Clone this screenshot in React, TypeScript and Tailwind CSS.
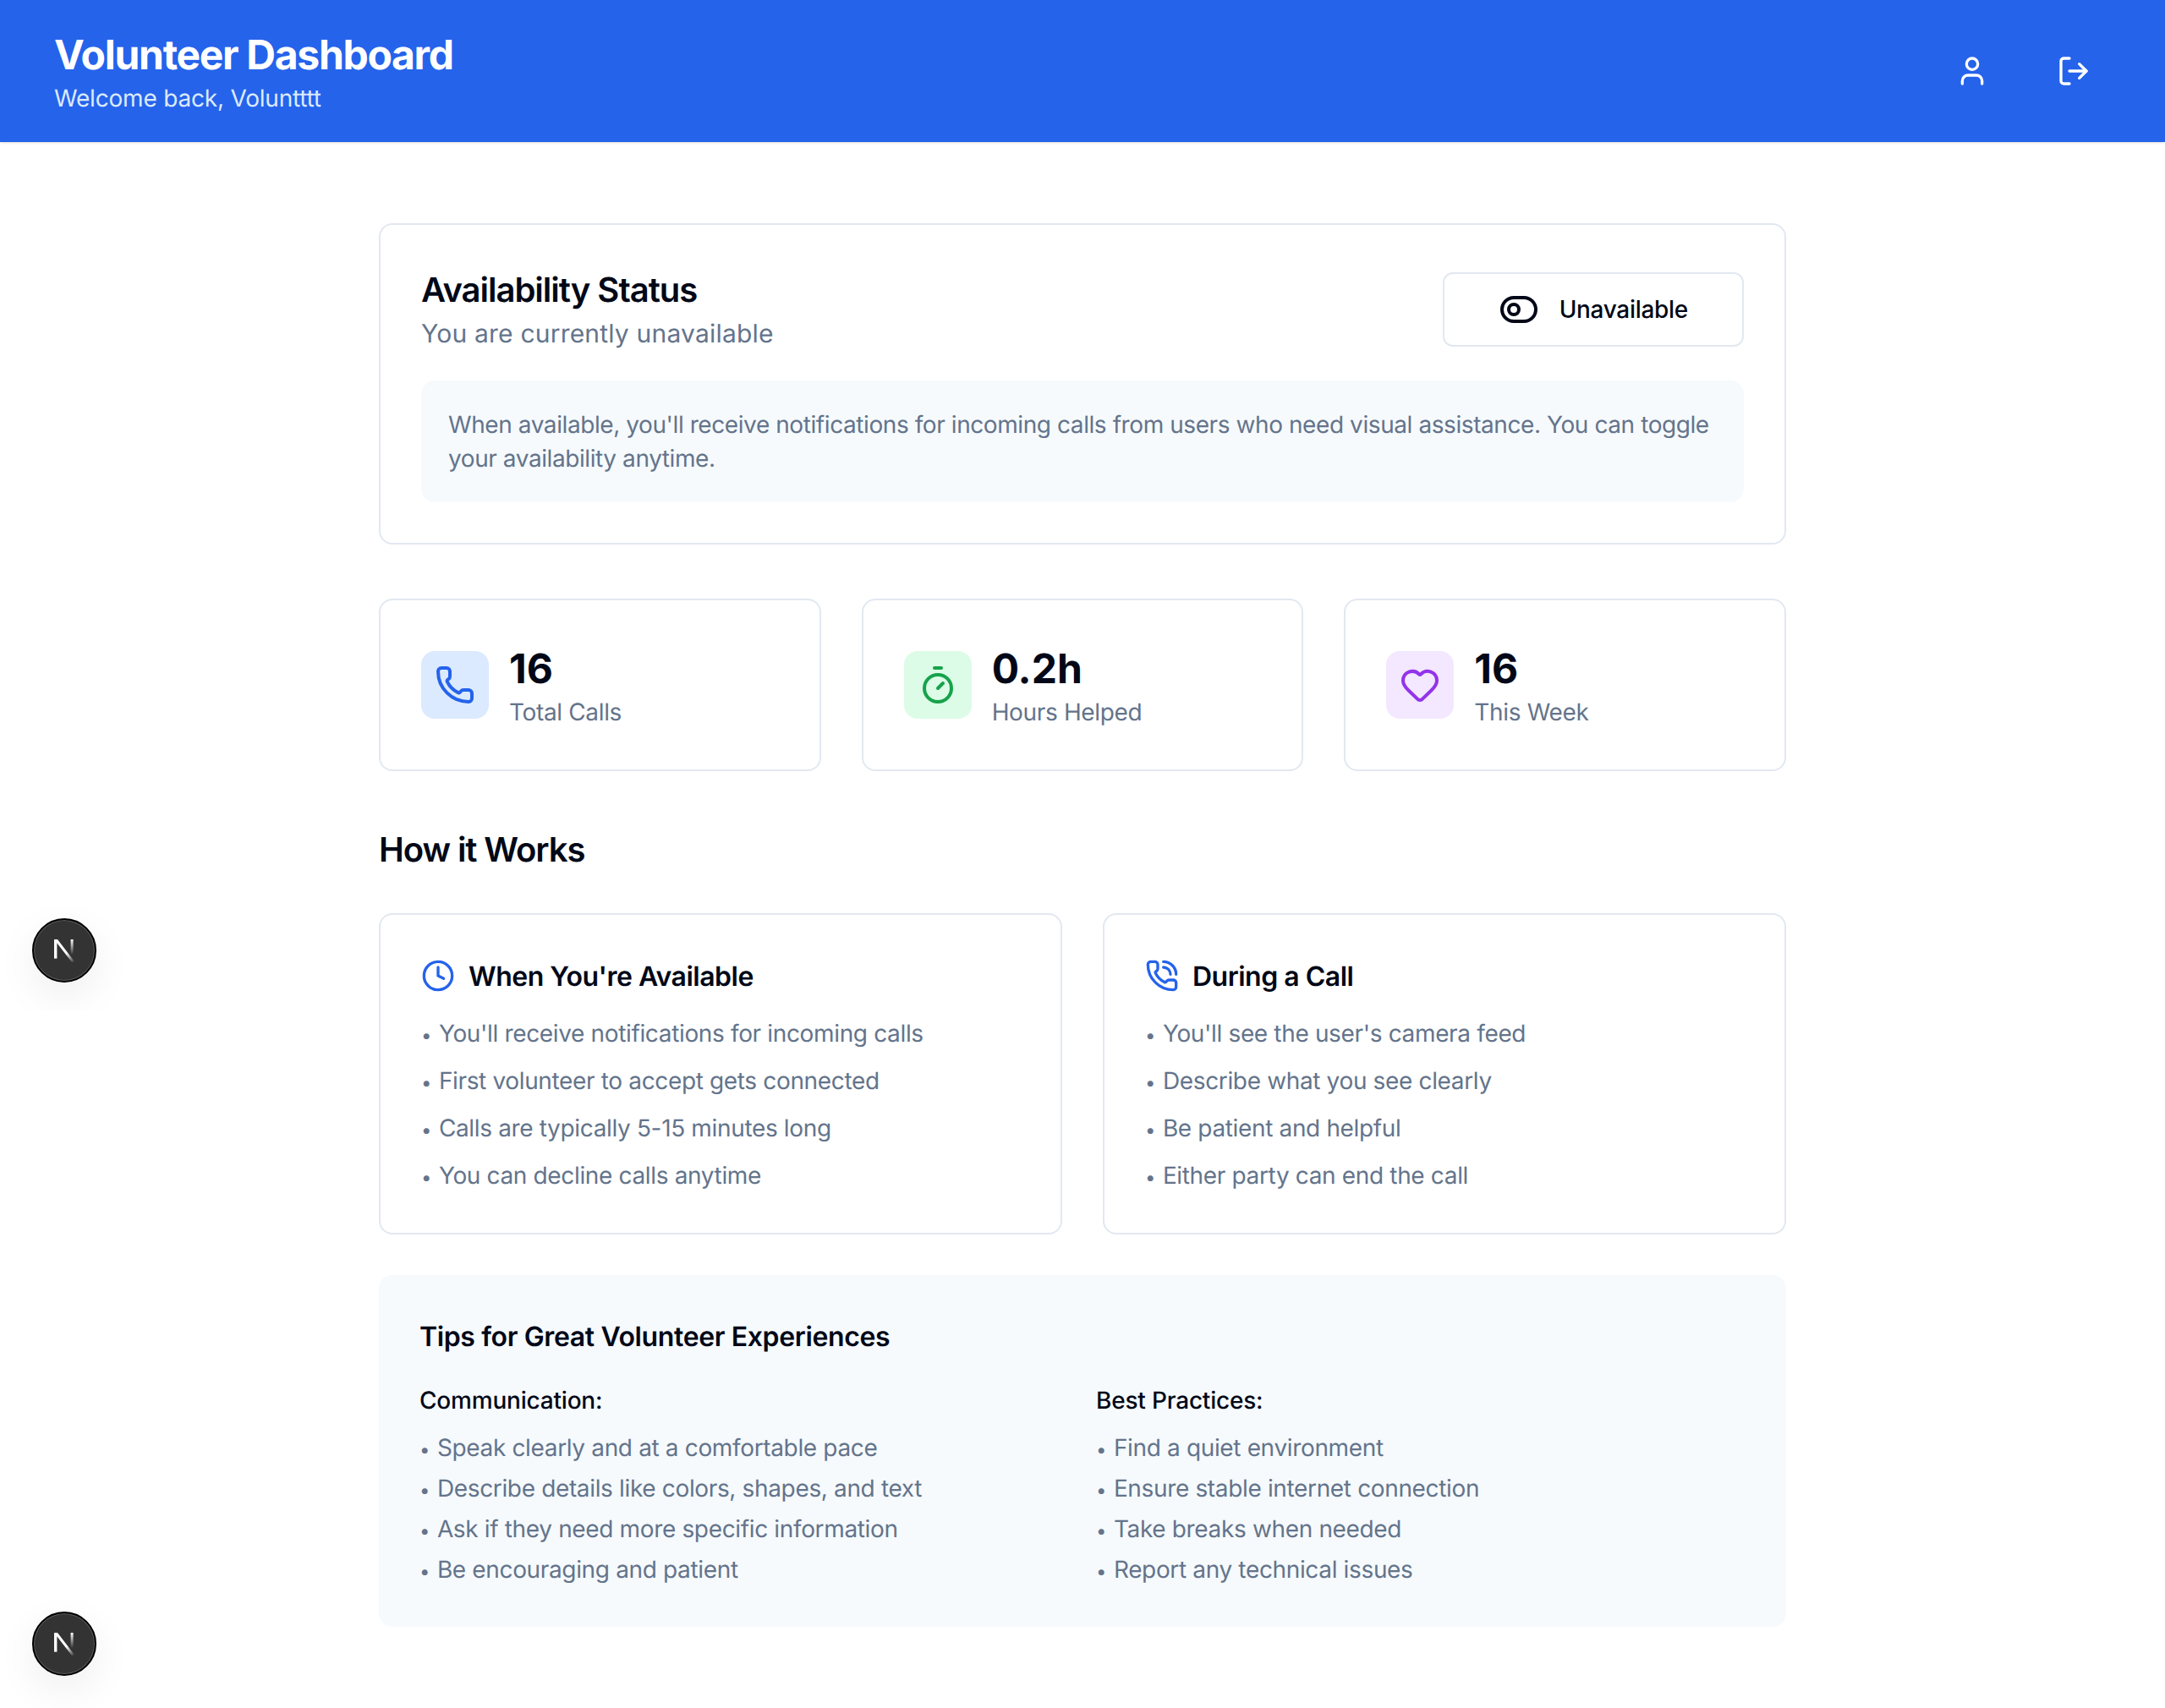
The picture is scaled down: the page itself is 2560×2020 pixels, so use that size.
import { Clock, Heart, LogOut, Phone, PhoneCall, Timer, User } from 'lucide-react';

const stats = [
  { value: '16', label: 'Total Calls', box: 'bg-[#dbeafe]', icon: <Phone className="w-12 h-12 text-[#2563eb]" /> },
  { value: '0.2h', label: 'Hours Helped', box: 'bg-[#dcfce7]', icon: <Timer className="w-12 h-12 text-[#16a34a]" /> },
  { value: '16', label: 'This Week', box: 'bg-[#f3e8ff]', icon: <Heart className="w-12 h-12 text-[#9333ea]" /> },
];

const howItWorks = [
  {
    title: "When You're Available",
    icon: <Clock className="w-10 h-10 text-[#2563eb]" />,
    items: [
      "You'll receive notifications for incoming calls",
      'First volunteer to accept gets connected',
      'Calls are typically 5-15 minutes long',
      'You can decline calls anytime',
    ],
  },
  {
    title: 'During a Call',
    icon: <PhoneCall className="w-10 h-10 text-[#2563eb]" />,
    items: [
      "You'll see the user's camera feed",
      'Describe what you see clearly',
      'Be patient and helpful',
      'Either party can end the call',
    ],
  },
];

const tips = [
  {
    title: 'Communication:',
    items: [
      'Speak clearly and at a comfortable pace',
      'Describe details like colors, shapes, and text',
      'Ask if they need more specific information',
      'Be encouraging and patient',
    ],
  },
  {
    title: 'Best Practices:',
    items: [
      'Find a quiet environment',
      'Ensure stable internet connection',
      'Take breaks when needed',
      'Report any technical issues',
    ],
  },
];

function ToggleIcon() {
  return (
    <svg viewBox="0 0 24 24" fill="none" stroke="currentColor" strokeWidth="2" strokeLinecap="round" strokeLinejoin="round" className="w-12 h-12 text-[#020817]">
      <rect x="2" y="5" width="20" height="14" rx="7" />
      <circle cx="9" cy="12" r="3" />
    </svg>
  );
}

function Bullet() {
  return <span className="text-[22px] leading-none mr-[3px]">• </span>;
}

function NextBadge({ id }: { id: string }) {
  return (
    <div className="w-[76px] h-[76px] rounded-full bg-[#333333] border-2 border-black ring-1 ring-inset ring-white/20 shadow-[0_16px_48px_rgba(0,0,0,0.07)] flex items-center justify-center">
      <svg viewBox="0 0 26 28" className="w-[26px] h-[28px]" fill="none">
        <defs>
          <linearGradient id={`${id}-a`} x1="0" y1="0" x2="1" y2="1">
            <stop offset="0.6" stopColor="#fff" />
            <stop offset="1" stopColor="#fff" stopOpacity="0" />
          </linearGradient>
          <linearGradient id={`${id}-b`} x1="0" y1="0" x2="0" y2="1">
            <stop offset="0" stopColor="#fff" />
            <stop offset="1" stopColor="#fff" stopOpacity="0" />
          </linearGradient>
        </defs>
        <path d="M1 1h3.4v22.6H1z" fill="#fff" />
        <path d="M1 1h4L25 27l-3 1z" fill={`url(#${id}-a)`} />
        <rect x="20.6" y="1" width="3" height="18" fill={`url(#${id}-b)`} />
      </svg>
    </div>
  );
}

export default function App() {
  return (
    <div className="relative min-h-[2020px] bg-white font-['Inter',sans-serif] text-[#020817] antialiased [text-rendering:geometricPrecision] overflow-hidden">
      <header className="h-[168px] bg-[#2563eb] shadow-sm px-16 flex items-center justify-between">
        <div>
          <h1 className="pt-[2px] text-[48px] leading-[62px] font-bold tracking-[-0.027em] text-white">Volunteer Dashboard</h1>
          <p className="text-[28px] leading-[40px] tracking-[-0.2px] text-[#dbeafe]">Welcome back, Voluntttt</p>
        </div>
        <div className="flex items-center gap-8">
          <button className="p-6 rounded-2xl text-white"><User className="w-10 h-10" /></button>
          <button className="p-6 rounded-2xl text-white"><LogOut className="w-10 h-10" /></button>
        </div>
      </header>

      <main className="w-[1664px] mx-auto pt-24 pb-24">
        <section className="border-2 border-[#e2e8f0] rounded-2xl p-12 mb-16">
          <div className="flex items-center justify-between mb-8">
            <div>
              <h2 className="pt-[2px] text-[40px] leading-[54px] font-semibold tracking-[-0.025em]">Availability Status</h2>
              <p className="pt-[2px] text-[30px] leading-[46px] tracking-[0.2px] text-[#64748b]">You are currently unavailable</p>
            </div>
            <button className="h-[88px] px-16 border-2 border-[#e2e8f0] rounded-xl flex items-center gap-6 text-[28px] leading-[40px] tracking-[-0.3px] font-medium">
              <ToggleIcon />
              Unavailable
            </button>
          </div>
          <div className="bg-[#f6fafd] rounded-2xl p-8">
            <p className="text-[28px] leading-[40px] tracking-[-0.42px] text-[#64748b]">
              When available, you'll receive notifications for incoming calls from users who need visual assistance. You can toggle your availability anytime.
            </p>
          </div>
        </section>

        <section className="grid grid-cols-3 gap-12 mb-16">
          {stats.map(s => (
            <div key={s.label} className="border-2 border-[#e2e8f0] rounded-2xl p-12 flex items-center gap-6">
              <div className={`w-20 h-20 rounded-2xl flex items-center justify-center ${s.box}`}>{s.icon}</div>
              <div>
                <div className="pt-[2px] text-[48px] leading-[62px] font-bold">{s.value}</div>
                <div className="text-[28px] leading-[40px] tracking-[-0.35px] text-[#64748b]">{s.label}</div>
              </div>
            </div>
          ))}
        </section>

        <h2 className="pt-[2px] text-[40px] leading-[54px] font-semibold tracking-[-0.027em] mb-12">How it Works</h2>
        <section className="grid grid-cols-2 gap-12 mb-12">
          {howItWorks.map(card => (
            <div key={card.title} className="border-2 border-[#e2e8f0] rounded-2xl p-12">
              <div className="flex items-center gap-4 h-12 mb-6">
                {card.icon}
                <h3 className="pt-[2px] text-[32px] leading-[46px] font-semibold tracking-[-0.5px]">{card.title}</h3>
              </div>
              <ul className="space-y-4 text-[28px] leading-[40px] tracking-[-0.35px] text-[#64748b]">
                {card.items.map(item => <li key={item}><Bullet />{item}</li>)}
              </ul>
            </div>
          ))}
        </section>

        <section className="bg-[#f6fafd] rounded-2xl p-12">
          <h3 className="pt-[2px] text-[32px] leading-[46px] font-semibold tracking-[-0.37px] mb-8">Tips for Great Volunteer Experiences</h3>
          <div className="grid grid-cols-2 gap-8">
            {tips.map(col => (
              <div key={col.title}>
                <h4 className="text-[28px] leading-[40px] tracking-[-0.2px] font-medium mb-4">{col.title}</h4>
                <ul className="space-y-2 text-[28px] leading-[40px] tracking-[-0.35px] text-[#64748b]">
                  {col.items.map(item => <li key={item}><Bullet />{item}</li>)}
                </ul>
              </div>
            ))}
          </div>
        </section>
      </main>

      <div className="absolute left-0 top-[1040px] w-[160px] h-[155px] overflow-hidden">
        <div className="absolute left-[38px] top-[46px]"><NextBadge id="n1" /></div>
      </div>
      <div className="absolute left-[38px] top-[1906px]"><NextBadge id="n2" /></div>
    </div>
  );
}
